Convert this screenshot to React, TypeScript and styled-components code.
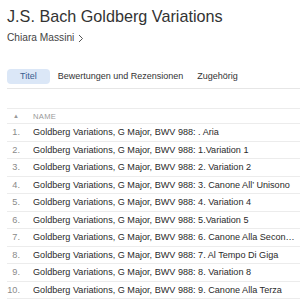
import styled, { createGlobalStyle } from 'styled-components';

const GlobalStyle = createGlobalStyle`
  body {
    margin: 0;
    background: #fff;
    font-family: "Liberation Sans", Arial, sans-serif;
    color: #333;
  }
`;

const Page = styled.div`
  width: 300px;
  height: 300px;
  overflow: hidden;
  padding: 5px 0 0 7px;
  box-sizing: border-box;
`;

const Title = styled.h1`
  margin: 0;
  font-size: 16.2px;
  font-weight: 400;
  color: #333;
  line-height: 22px;
  white-space: nowrap;
`;

const Artist = styled.div`
  margin-top: 4px;
  font-size: 10.2px;
  line-height: 14px;
  color: #444;
  display: flex;
  align-items: center;
  gap: 4px;
`;

const TabBar = styled.div`
  margin-top: 24px;
  display: flex;
  align-items: center;
  padding-bottom: 4px;
  border-bottom: 1px solid #e6e6e6;
`;

const Tab = styled.div<{ $active?: boolean }>`
  font-size: 9px;
  height: 15px;
  line-height: 15px;
  padding: 0 ${(p) => (p.$active ? '13px' : '0')};
  border-radius: 4px;
  background: ${(p) => (p.$active ? '#dbe7f7' : 'transparent')};
  color: ${(p) => (p.$active ? '#3b5d8f' : '#333')};
  margin-right: ${(p) => (p.$active ? '8px' : '14px')};
`;

const Table = styled.div`
  margin-top: 19px;
  border-top: 1px solid #ececec;
`;

const Row = styled.div<{ $head?: boolean }>`
  display: grid;
  grid-template-columns: 13px 1fr;
  column-gap: 13px;
  align-items: center;
  height: ${(p) => (p.$head ? '15px' : '17.5px')};
  border-bottom: 1px solid #ececec;
  box-sizing: border-box;
  padding-right: 5px;
`;

const Num = styled.div`
  font-size: 9.2px;
  color: #8a8a8a;
  text-align: right;
`;

const Arrow = styled.div`
  font-size: 6px;
  color: #999;
  padding-left: 6px;
`;

const HeadLabel = styled.div`
  font-size: 7.6px;
  color: #999;
  letter-spacing: 0.3px;
`;

const Name = styled.div`
  font-size: 9.1px;
  color: #2a2a2a;
  white-space: nowrap;
  overflow: hidden;
  text-overflow: ellipsis;
`;

const tracks = [
  '. Aria',
  '1.Variation 1',
  '2. Variation 2',
  '3. Canone All\u2019 Unisono',
  '4. Variation 4',
  '5.Variation 5',
  '6. Canone Alla Seconda',
  '7. Al Tempo Di Giga',
  '8. Variation 8',
  '9. Canone Alla Terza',
];

export default function App() {
  return (
    <Page>
      <GlobalStyle />
      <Title>J.S. Bach Goldberg Variations</Title>
      <Artist>
        Chiara Massini
        <svg width="6" height="9" viewBox="0 0 6 9">
          <path d="M1 1l3.5 3.5L1 8" fill="none" stroke="#555" strokeWidth="1" />
        </svg>
      </Artist>
      <TabBar>
        <Tab $active>Titel</Tab>
        <Tab>Bewertungen und Rezensionen</Tab>
        <Tab>Zugehörig</Tab>
      </TabBar>
      <Table>
        <Row $head>
          <Arrow>▲</Arrow>
          <HeadLabel>NAME</HeadLabel>
        </Row>
        {tracks.map((t, i) => (
          <Row key={i}>
            <Num>{i + 1}.</Num>
            <Name>Goldberg Variations, G Major, BWV 988: {t}</Name>
          </Row>
        ))}
      </Table>
    </Page>
  );
}
